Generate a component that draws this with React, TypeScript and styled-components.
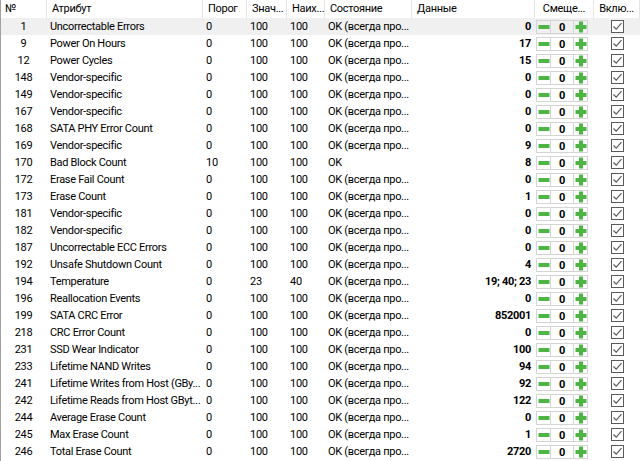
import React from 'react'
import styled, { createGlobalStyle } from 'styled-components'

const Global = createGlobalStyle`
  html, body {
    margin: 0;
    padding: 0;
    background: #fff;
  }
  body {
    font-family: Roboto, "Segoe UI", "Noto Sans", sans-serif;
    font-size: 11px;
    letter-spacing: -0.3px;
    color: #000;
  }
`

type Row = {
  id: number
  name: string
  thr: string
  val: string
  worst: string
  state: string
  data: string
}

const OK = 'OK (всегда про...'

const rows: Row[] = [
  { id: 1, name: 'Uncorrectable Errors', thr: '0', val: '100', worst: '100', state: OK, data: '0' },
  { id: 9, name: 'Power On Hours', thr: '0', val: '100', worst: '100', state: OK, data: '17' },
  { id: 12, name: 'Power Cycles', thr: '0', val: '100', worst: '100', state: OK, data: '15' },
  { id: 148, name: 'Vendor-specific', thr: '0', val: '100', worst: '100', state: OK, data: '0' },
  { id: 149, name: 'Vendor-specific', thr: '0', val: '100', worst: '100', state: OK, data: '0' },
  { id: 167, name: 'Vendor-specific', thr: '0', val: '100', worst: '100', state: OK, data: '0' },
  { id: 168, name: 'SATA PHY Error Count', thr: '0', val: '100', worst: '100', state: OK, data: '0' },
  { id: 169, name: 'Vendor-specific', thr: '0', val: '100', worst: '100', state: OK, data: '9' },
  { id: 170, name: 'Bad Block Count', thr: '10', val: '100', worst: '100', state: 'OK', data: '8' },
  { id: 172, name: 'Erase Fail Count', thr: '0', val: '100', worst: '100', state: OK, data: '0' },
  { id: 173, name: 'Erase Count', thr: '0', val: '100', worst: '100', state: OK, data: '1' },
  { id: 181, name: 'Vendor-specific', thr: '0', val: '100', worst: '100', state: OK, data: '0' },
  { id: 182, name: 'Vendor-specific', thr: '0', val: '100', worst: '100', state: OK, data: '0' },
  { id: 187, name: 'Uncorrectable ECC Errors', thr: '0', val: '100', worst: '100', state: OK, data: '0' },
  { id: 192, name: 'Unsafe Shutdown Count', thr: '0', val: '100', worst: '100', state: OK, data: '4' },
  { id: 194, name: 'Temperature', thr: '0', val: '23', worst: '40', state: OK, data: '19; 40; 23' },
  { id: 196, name: 'Reallocation Events', thr: '0', val: '100', worst: '100', state: OK, data: '0' },
  { id: 199, name: 'SATA CRC Error', thr: '0', val: '100', worst: '100', state: OK, data: '852001' },
  { id: 218, name: 'CRC Error Count', thr: '0', val: '100', worst: '100', state: OK, data: '0' },
  { id: 231, name: 'SSD Wear Indicator', thr: '0', val: '100', worst: '100', state: OK, data: '100' },
  { id: 233, name: 'Lifetime NAND Writes', thr: '0', val: '100', worst: '100', state: OK, data: '94' },
  { id: 241, name: 'Lifetime Writes from Host (GBy...', thr: '0', val: '100', worst: '100', state: OK, data: '92' },
  { id: 242, name: 'Lifetime Reads from Host GByt...', thr: '0', val: '100', worst: '100', state: OK, data: '122' },
  { id: 244, name: 'Average Erase Count', thr: '0', val: '100', worst: '100', state: OK, data: '0' },
  { id: 245, name: 'Max Erase Count', thr: '0', val: '100', worst: '100', state: OK, data: '1' },
  { id: 246, name: 'Total Erase Count', thr: '0', val: '100', worst: '100', state: OK, data: '2720' },
]

const COLS = '47px 156px 44px 40px 38px 87px 123px 59px 46px'

const Table = styled.div`
  width: 640px;
  height: 461px;
  overflow: hidden;
  border-left: 1px solid #a0a0a0;
  box-sizing: border-box;
`

const Header = styled.div`
  display: grid;
  grid-template-columns: ${COLS};
  height: 18px;
  margin-left: -1px;
`

const HeadCell = styled.div<{ $center?: boolean }>`
  height: 18px;
  line-height: 17px;
  padding-left: ${(p) => (p.$center ? '0' : '5px')};
  text-align: ${(p) => (p.$center ? 'center' : 'left')};
  border-right: 1px solid #e5e5e5;
  box-sizing: border-box;
  white-space: nowrap;
  overflow: hidden;
`

const RowLine = styled.div<{ $hl?: boolean }>`
  display: grid;
  grid-template-columns: ${COLS};
  height: 17px;
  margin-left: -1px;
  background: ${(p) => (p.$hl ? '#f0f0f0' : 'transparent')};
`

const Cell = styled.div<{ $align?: 'left' | 'center' | 'right'; $bold?: boolean }>`
  height: 17px;
  line-height: 18px;
  white-space: nowrap;
  overflow: hidden;
  text-align: ${(p) => p.$align || 'left'};
  padding: 0 ${(p) => (p.$align === 'right' ? '4px' : '0')} 0 ${(p) => (p.$align === 'left' || !p.$align ? '3px' : '0')};
  font-weight: ${(p) => (p.$bold ? 700 : 400)};
  box-sizing: border-box;
`

const Spinner = styled.div`
  display: flex;
  align-items: center;
  height: 17px;
  padding-left: 1px;
`

const SpinBtn = styled.div`
  width: 15px;
  height: 14px;
  border: 1px solid #d4d4d4;
  box-sizing: border-box;
  display: flex;
  align-items: center;
  justify-content: center;
  position: relative;
`

const SpinValue = styled.div`
  width: 22px;
  height: 14px;
  line-height: 13px;
  border-top: 1px solid #d4d4d4;
  border-bottom: 1px solid #d4d4d4;
  box-sizing: border-box;
  text-align: center;
  font-weight: 700;
`

const Bar = styled.span<{ $vertical?: boolean }>`
  position: absolute;
  background: #4cb544;
  width: ${(p) => (p.$vertical ? '4px' : '11px')};
  height: ${(p) => (p.$vertical ? '11px' : '4px')};
  left: 50%;
  top: 50%;
  transform: translate(-50%, -50%);
`

const CheckCell = styled.div`
  display: flex;
  align-items: center;
  justify-content: center;
  height: 17px;
`

const CheckBox = styled.span`
  width: 13px;
  height: 13px;
  border: 1px solid #5a5a5a;
  box-sizing: border-box;
  background: #fff;
  display: flex;
  align-items: center;
  justify-content: center;
`

const Check = () => (
  <CheckBox>
    <svg width="11" height="11" viewBox="0 0 11 11">
      <path d="M1.5 5.5 L4.2 8.2 L9.5 2.2" fill="none" stroke="#5a5a5a" strokeWidth="1.2" />
    </svg>
  </CheckBox>
)

const App = () => {
  return (
    <Table>
      <Global />
      <Header>
        <HeadCell>№</HeadCell>
        <HeadCell>Атрибут</HeadCell>
        <HeadCell>Порог</HeadCell>
        <HeadCell>Знач...</HeadCell>
        <HeadCell>Наих...</HeadCell>
        <HeadCell>Состояние</HeadCell>
        <HeadCell>Данные</HeadCell>
        <HeadCell $center>Смеще...</HeadCell>
        <HeadCell $center>Вклю...</HeadCell>
      </Header>
      {rows.map((r, i) => (
        <RowLine key={r.id} $hl={i === 0}>
          <Cell $align="center">{r.id}</Cell>
          <Cell>{r.name}</Cell>
          <Cell>{r.thr}</Cell>
          <Cell>{r.val}</Cell>
          <Cell>{r.worst}</Cell>
          <Cell>{r.state}</Cell>
          <Cell $align="right" $bold>{r.data}</Cell>
          <Spinner>
            <SpinBtn>
              <Bar />
            </SpinBtn>
            <SpinValue>0</SpinValue>
            <SpinBtn>
              <Bar />
              <Bar $vertical />
            </SpinBtn>
          </Spinner>
          <CheckCell>
            <Check />
          </CheckCell>
        </RowLine>
      ))}
    </Table>
  )
}

export default App
